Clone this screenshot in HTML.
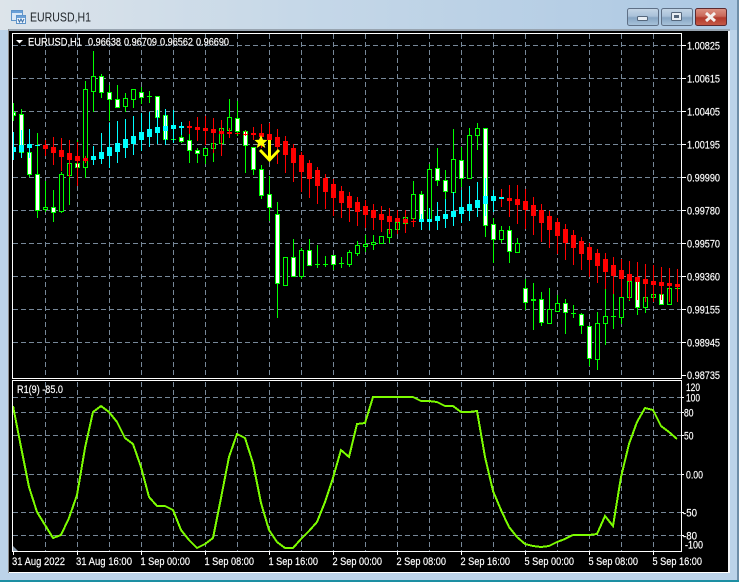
<!DOCTYPE html>
<html><head><meta charset="utf-8"><style>
html,body{margin:0;padding:0;background:#bcd3e9}
svg{display:block}
text{font-family:"Liberation Sans",sans-serif;font-size:11px;fill:#fff;stroke:#fff;stroke-width:.18}
</style></head><body>
<svg xmlns="http://www.w3.org/2000/svg" width="739" height="582" viewBox="0 0 739 582" shape-rendering="geometricPrecision">
<defs>
<linearGradient id="tb" x1="0" x2="1" y1="0" y2="0"><stop offset="0" stop-color="#dde4ea"/><stop offset=".4" stop-color="#c6d8e8"/><stop offset="1" stop-color="#acc8e3"/></linearGradient>
<linearGradient id="btn" x1="0" x2="0" y1="0" y2="1"><stop offset="0" stop-color="#c5d6e6"/><stop offset=".45" stop-color="#a9c1d9"/><stop offset=".55" stop-color="#87a5c3"/><stop offset="1" stop-color="#a9c4dc"/></linearGradient>
<linearGradient id="cl" x1="0" x2="0" y1="0" y2="1"><stop offset="0" stop-color="#dc9384"/><stop offset=".45" stop-color="#c9695a"/><stop offset=".55" stop-color="#b23a2c"/><stop offset="1" stop-color="#c65a48"/></linearGradient>
</defs>
<rect width="739" height="582" fill="#bcd3e9"/>
<rect width="739" height="30" fill="url(#tb)"/>
<rect x="8" y="29" width="722" height="2" fill="#98a4b0"/>
<rect x="8" y="29" width="1" height="544" fill="#8c8c8c"/>
<rect x="9" y="31" width="719" height="541" fill="#000"/>
<rect x="9" y="572" width="721" height="1" fill="#fff"/>
<rect x="728" y="31" width="2" height="542" fill="#f4f6f8"/>
<rect x="737" y="0" width="2" height="582" fill="#6f8ea8"/>
<rect x="0" y="580" width="739" height="2" fill="#1d8fa3"/>

<!-- title icon -->
<rect x="11.5" y="10.5" width="11" height="10" fill="#dbe9f7" stroke="#5f94c9"/>
<rect x="12" y="11" width="10" height="2" fill="#6aa0d8"/>
<rect x="16.5" y="15.5" width="9" height="8" fill="#eef5fc" stroke="#5f94c9"/>
<rect x="17" y="16" width="8" height="2" fill="#6aa0d8"/>
<path d="M18 19l1.5 3 1.5-3 1.5 3 1.5-3" fill="none" stroke="#3b6fa8"/>
<text x="30" y="21.5" textLength="61" lengthAdjust="spacingAndGlyphs" style="font-size:12.5px;fill:#22272c;stroke:none">EURUSD,H1</text>

<!-- buttons -->
<rect x="627.5" y="8.5" width="31" height="17" rx="2" fill="url(#btn)" stroke="#5f7086"/>
<rect x="637.5" y="16.5" width="10" height="4" rx="1" fill="#e8eef4" stroke="#55677c"/>
<rect x="661.5" y="8.5" width="31" height="17" rx="2" fill="url(#btn)" stroke="#5f7086"/>
<rect x="671.5" y="12.5" width="10" height="8" rx="1" fill="#e8eef4" stroke="#55677c"/>
<rect x="674" y="15" width="5" height="3" fill="#55677c"/>
<rect x="695.5" y="8.5" width="31" height="17" rx="2" fill="url(#cl)" stroke="#5c2a30"/>
<path d="M706 13l9 8M715 13l-9 8" stroke="#f4f0ee" stroke-width="3" fill="none"/>

<!-- grid -->
<g fill="none" stroke="#778899" stroke-dasharray="5 3">
<path d="M13 45.5H681M13 78.5H681M13 111.5H681M13 144.5H681M13 177.5H681M13 210.5H681M13 243.5H681M13 276.5H681M13 309.5H681M13 342.5H681"/>
<path d="M45.5 34V378M77.5 34V378M109.5 34V378M141.5 34V378M173.5 34V378M205.5 34V378M237.5 34V378M269.5 34V378M301.5 34V378M333.5 34V378M365.5 34V378M397.5 34V378M429.5 34V378M461.5 34V378M493.5 34V378M525.5 34V378M557.5 34V378M589.5 34V378M621.5 34V378M653.5 34V378"/>
<path d="M13 397.5H681M13 412.5H681M13 435.5H681M13 474.5H681M13 512.5H681M13 535.5H681"/>
<path d="M45.5 382V551M77.5 382V551M109.5 382V551M141.5 382V551M173.5 382V551M205.5 382V551M237.5 382V551M269.5 382V551M301.5 382V551M333.5 382V551M365.5 382V551M397.5 382V551M429.5 382V551M461.5 382V551M493.5 382V551M525.5 382V551M557.5 382V551M589.5 382V551M621.5 382V551M653.5 382V551"/>
</g>

<!-- green wicks -->
<path fill="none" stroke="#00ff00" d="M13.5 103V121M21.5 109V157M29.5 148V177M37.5 133V218M45.5 181V212M53.5 190V222M61.5 172V213M69.5 140V205M77.5 140V186M85.5 81V178M93.5 51V112M101.5 74V98M109.5 85V121M117.5 85V108M125.5 93V112M133.5 89V108M141.5 87V104M149.5 91V103M165.5 109V144M173.5 135V143M181.5 133V143M189.5 134V163M197.5 148V163M205.5 148V164M213.5 143V162M221.5 128V156M229.5 99V138M237.5 101V136M245.5 130V173M253.5 147V175M261.5 165V199M269.5 176V221M277.5 202V318M293.5 239V276M301.5 248V279M309.5 239V265M317.5 245V268M325.5 256V267M333.5 255V270M341.5 257V268M349.5 250V267M357.5 241V256M365.5 235V252M373.5 235V250M381.5 236V243M389.5 229V243M397.5 222V233M405.5 217V233M413.5 181V220M421.5 191V220M429.5 164V220M437.5 148V186M445.5 170V200M453.5 129V192M461.5 147V187M469.5 128V178M477.5 123V150M485.5 128V237M493.5 218V263M501.5 226V243M509.5 226V263M517.5 238V253M525.5 279V310M533.5 283V330M541.5 292V326M549.5 288V323M557.5 295V311M565.5 299V334M573.5 305V318M581.5 313V334M589.5 326V366M597.5 312V370M605.5 289V345M613.5 294V329M621.5 297V324M629.5 281V301M637.5 281V315M645.5 297V313"/>
<!-- green crosses -->
<path fill="none" stroke="#00ff00" d="M147 96.5h5M171 139.5h5M315 264.5h5M323 264.5h5M339 263.5h5M531 299.5h5M531 300.5h5M571 313.5h5M611 316.5h5M675 288.5h5"/>
<!-- hollow bodies -->
<path fill="#000" stroke="#00ff00" d="M43.5 207.5h4v2h-4zM59.5 174.5h4v37h-4zM67.5 163.5h4v12h-4zM83.5 89.5h4v78h-4zM91.5 76.5h4v15h-4zM123.5 98.5h4v8h-4zM131.5 89.5h4v10h-4zM203.5 148.5h4v7h-4zM211.5 143.5h4v5h-4zM219.5 128.5h4v15h-4zM227.5 117.5h4v13h-4zM283.5 257.5h4v28h-4zM299.5 250.5h4v26h-4zM347.5 252.5h4v12h-4zM355.5 245.5h4v8h-4zM363.5 244.5h4v2h-4zM371.5 242.5h4v2h-4zM379.5 236.5h4v7h-4zM387.5 229.5h4v8h-4zM395.5 222.5h4v7h-4zM403.5 217.5h4v6h-4zM411.5 194.5h4v24h-4zM427.5 169.5h4v50h-4zM451.5 159.5h4v33h-4zM467.5 135.5h4v43h-4zM475.5 128.5h4v7h-4zM499.5 230.5h4v9h-4zM515.5 243.5h4v9h-4zM547.5 309.5h4v14h-4zM555.5 303.5h4v8h-4zM595.5 323.5h4v36h-4zM603.5 316.5h4v7h-4zM619.5 297.5h4v20h-4zM627.5 281.5h4v16h-4zM643.5 297.5h4v10h-4zM651.5 294.5h4v3h-4zM667.5 288.5h4v16h-4z"/>
<!-- white bodies -->
<path fill="#fff" stroke="#00ff00" d="M13.5 112.5h2v3h-2zM19.5 114.5h4v38h-4zM27.5 152.5h4v22h-4zM35.5 174.5h4v36h-4zM51.5 207.5h4v5h-4zM75.5 163.5h4v4h-4zM99.5 76.5h4v16h-4zM107.5 92.5h4v7h-4zM115.5 99.5h4v8h-4zM139.5 92.5h4v5h-4zM155.5 96.5h4v21h-4zM163.5 115.5h4v24h-4zM179.5 137.5h4v4h-4zM187.5 140.5h4v10h-4zM195.5 150.5h4v3h-4zM235.5 118.5h4v13h-4zM243.5 131.5h4v14h-4zM251.5 147.5h4v22h-4zM259.5 169.5h4v26h-4zM267.5 194.5h4v13h-4zM275.5 214.5h4v69h-4zM291.5 257.5h4v19h-4zM307.5 250.5h4v15h-4zM331.5 255.5h4v9h-4zM419.5 194.5h4v26h-4zM435.5 168.5h4v12h-4zM443.5 180.5h4v11h-4zM459.5 160.5h4v18h-4zM483.5 128.5h4v97h-4zM491.5 224.5h4v15h-4zM507.5 230.5h4v21h-4zM523.5 288.5h4v14h-4zM539.5 299.5h4v23h-4zM563.5 303.5h4v9h-4zM579.5 314.5h4v11h-4zM587.5 326.5h4v32h-4zM635.5 281.5h4v26h-4zM659.5 294.5h4v10h-4z"/>

<!-- red wicks -->
<path fill="none" stroke="#ff0000" d="M45.5 140V156M53.5 137V165M61.5 138V171M69.5 140V177M77.5 142V186M85.5 156V163M189.5 121V134M197.5 117V141M205.5 116V145M213.5 118V153M221.5 120V156M229.5 128V138M245.5 131V136M253.5 127V140M261.5 124V148M269.5 123V153M277.5 129V164M285.5 136V173M293.5 144V182M301.5 152V192M309.5 160V198M317.5 167V204M325.5 174V209M333.5 179V216M341.5 186V218M349.5 192V222M357.5 197V226M365.5 200V228M373.5 204V230M381.5 206V232M389.5 208V234M397.5 210V234M405.5 210V233M413.5 218V227M501.5 189V207M509.5 185V217M517.5 185V224M525.5 189V229M533.5 197V235M541.5 204V242M549.5 211V248M557.5 218V254M565.5 224V260M573.5 230V265M581.5 237V270M589.5 243V277M597.5 249V283M605.5 253V289M613.5 257V294M621.5 259V297M629.5 261V300M637.5 262V300M645.5 264V302M653.5 265V302M661.5 267V300M669.5 268V302M677.5 269V302"/>
<!-- red bodies -->
<path fill="#ff0000" d="M43 145h5v4h-5zM51 147h5v6h-5zM59 150h5v7h-5zM67 153h5v7h-5zM75 156h5v5h-5zM83 158h5v3h-5zM187 126h5v2h-5zM195 127h5v3h-5zM203 128h5v3h-5zM211 129h5v4h-5zM219 131h5v3h-5zM227 132h5v2h-5zM235 133h5v1h-5zM243 134h5v1h-5zM251 133h5v2h-5zM259 133h5v4h-5zM267 134h5v6h-5zM275 137h5v10h-5zM283 141h5v14h-5zM291 148h5v15h-5zM299 155h5v17h-5zM307 163h5v16h-5zM315 170h5v16h-5zM323 178h5v14h-5zM331 184h5v14h-5zM339 191h5v12h-5zM347 196h5v12h-5zM355 202h5v10h-5zM363 206h5v9h-5zM371 210h5v8h-5zM379 214h5v6h-5zM387 216h5v6h-5zM395 218h5v4h-5zM403 219h5v4h-5zM411 221h5v1h-5zM507 198h5v3h-5zM515 199h5v6h-5zM523 201h5v9h-5zM531 205h5v11h-5zM539 210h5v13h-5zM547 216h5v14h-5zM555 222h5v14h-5zM563 229h5v14h-5zM571 235h5v13h-5zM579 241h5v13h-5zM587 247h5v13h-5zM595 253h5v13h-5zM603 259h5v13h-5zM611 265h5v11h-5zM619 270h5v9h-5zM627 274h5v7h-5zM635 277h5v5h-5zM643 279h5v5h-5zM651 281h5v4h-5zM659 282h5v4h-5zM667 283h5v3h-5zM675 284h5v3h-5z"/>
<!-- cyan wicks -->
<path fill="none" stroke="#00ffff" d="M13.5 132V160M21.5 130V158M29.5 129V158M93.5 146V165M101.5 133V164M109.5 123V168M117.5 121V163M125.5 119V158M133.5 116V155M141.5 113V151M149.5 112V147M157.5 110V144M165.5 109V145M173.5 110V143M181.5 122V135M421.5 214V230M429.5 208V230M437.5 202V230M445.5 199V228M453.5 192V226M461.5 190V223M469.5 186V221M477.5 182V217M485.5 178V216M493.5 190V212"/>
<!-- cyan bodies -->
<path fill="#00ffff" d="M13 147h3v5h-3zM19 145h5v7h-5zM27 144h5v4h-5zM35 145h5v1h-5zM91 156h5v4h-5zM99 152h5v7h-5zM107 147h5v9h-5zM115 143h5v9h-5zM123 139h5v9h-5zM131 136h5v8h-5zM139 132h5v8h-5zM147 129h5v8h-5zM155 127h5v6h-5zM163 126h5v5h-5zM171 125h5v4h-5zM179 126h5v2h-5zM419 219h5v3h-5zM427 219h5v3h-5zM435 216h5v5h-5zM443 214h5v5h-5zM451 211h5v6h-5zM459 207h5v7h-5zM467 204h5v7h-5zM475 200h5v8h-5zM483 196h5v8h-5zM491 196h5v5h-5zM499 197h5v2h-5z"/>

<!-- signal -->
<polygon fill="#ffff00" points="261,135 263,139.8 267.5,140 264,143.2 265.3,148 261,145.3 256.7,148 258,143.2 254.5,140 259,139.8"/>
<path d="M269.5 140V158M260 150L269.5 160L279 150" fill="none" stroke="#ffff00" stroke-width="3"/>

<!-- oscillator -->
<polyline shape-rendering="crispEdges" fill="none" stroke="#7cfc00" stroke-width="2" points="13,406 21,447 29,487 37,512 45,525 53,538 61,535 69,518 77,495 85,448 93,412 101,406 109,412 117,422 125,438 133,444 141,467 149,497 157,506 165,506 173,510 181,530 189,540 197,548 205,544 213,538 221,498 229,457 237,434 245,438 253,463 261,503 269,530 277,542 285,548 293,548 301,539 309,531 317,522 325,502 333,478 341,450 349,457 357,424 365,423 373,397 381,397 389,397 397,397 405,397 413,397 421,401 429,401 437,402 445,406 453,406 461,412 469,412 477,411 485,457 493,491 501,510 509,527 517,537 525,544 533,546 541,547 549,546 557,542 565,539 573,535 581,535 589,535 597,534 605,516 613,526 621,477 629,444 637,422 645,408 653,410 661,426 669,432 677,439"/>
<polygon points="13,546 19,552 13,552" fill="#8899aa"/>

<!-- frames -->
<g fill="none" stroke="#fff">
<rect x="12.5" y="33.5" width="669" height="345"/>
<rect x="12.5" y="380.5" width="669" height="171"/>
<path d="M682 45.5h4M682 78.5h4M682 111.5h4M682 144.5h4M682 177.5h4M682 210.5h4M682 243.5h4M682 276.5h4M682 309.5h4M682 342.5h4M682 375.5h4"/>
<path d="M682 397.5h2M682 412.5h2M682 435.5h2M682 474.5h2M682 512.5h2M682 535.5h2"/>
<path d="M13.5 552v3M77.5 552v3M141.5 552v3M205.5 552v3M269.5 552v3M333.5 552v3M397.5 552v3M461.5 552v3M525.5 552v3M589.5 552v3M653.5 552v3"/>
</g>

<!-- header -->
<polygon points="16,40 23,40 19.5,43.5" fill="#fff"/>
<text x="28" y="45.5" textLength="54" lengthAdjust="spacingAndGlyphs">EURUSD,H1</text>
<text x="88" y="45.5" textLength="33" lengthAdjust="spacingAndGlyphs">0.96638</text>
<text x="124" y="45.5" textLength="33" lengthAdjust="spacingAndGlyphs">0.96709</text>
<text x="160" y="45.5" textLength="33" lengthAdjust="spacingAndGlyphs">0.96562</text>
<text x="196" y="45.5" textLength="33" lengthAdjust="spacingAndGlyphs">0.96690</text>
<text x="17" y="393" textLength="46" lengthAdjust="spacingAndGlyphs">R1(9) -85.0</text>

<!-- price labels -->
<g>
<text x="687" y="49.5" textLength="33" lengthAdjust="spacingAndGlyphs">1.00825</text>
<text x="687" y="82.5" textLength="33" lengthAdjust="spacingAndGlyphs">1.00615</text>
<text x="687" y="115.5" textLength="33" lengthAdjust="spacingAndGlyphs">1.00405</text>
<text x="687" y="148.5" textLength="33" lengthAdjust="spacingAndGlyphs">1.00195</text>
<text x="687" y="181.5" textLength="33" lengthAdjust="spacingAndGlyphs">0.99990</text>
<text x="687" y="214.5" textLength="33" lengthAdjust="spacingAndGlyphs">0.99780</text>
<text x="687" y="247.5" textLength="33" lengthAdjust="spacingAndGlyphs">0.99570</text>
<text x="687" y="280.5" textLength="33" lengthAdjust="spacingAndGlyphs">0.99360</text>
<text x="687" y="313.5" textLength="33" lengthAdjust="spacingAndGlyphs">0.99155</text>
<text x="687" y="346.5" textLength="33" lengthAdjust="spacingAndGlyphs">0.98945</text>
<text x="687" y="379" textLength="33" lengthAdjust="spacingAndGlyphs">0.98735</text>
<text x="686" y="391" textLength="14" lengthAdjust="spacingAndGlyphs">120</text>
<text x="686" y="401.5" textLength="14" lengthAdjust="spacingAndGlyphs">100</text>
<text x="684" y="416.5" textLength="9.5" lengthAdjust="spacingAndGlyphs">80</text>
<text x="684" y="439.5" textLength="9.5" lengthAdjust="spacingAndGlyphs">50</text>
<text x="686" y="478.5" textLength="17" lengthAdjust="spacingAndGlyphs">0.00</text>
<text x="683" y="516.5" textLength="14" lengthAdjust="spacingAndGlyphs">-50</text>
<text x="683" y="539.5" textLength="14" lengthAdjust="spacingAndGlyphs">-80</text>
<text x="685" y="548.5" textLength="18" lengthAdjust="spacingAndGlyphs">-100</text>
</g>

<!-- time labels -->
<g>
<text x="12" y="565" textLength="53" lengthAdjust="spacingAndGlyphs">31 Aug 2022</text>
<text x="76" y="565" textLength="56" lengthAdjust="spacingAndGlyphs">31 Aug 16:00</text>
<text x="140.5" y="565" textLength="49.5" lengthAdjust="spacingAndGlyphs">1 Sep 00:00</text>
<text x="204.5" y="565" textLength="49.5" lengthAdjust="spacingAndGlyphs">1 Sep 08:00</text>
<text x="268.5" y="565" textLength="49.5" lengthAdjust="spacingAndGlyphs">1 Sep 16:00</text>
<text x="332.5" y="565" textLength="49.5" lengthAdjust="spacingAndGlyphs">2 Sep 00:00</text>
<text x="396.5" y="565" textLength="49.5" lengthAdjust="spacingAndGlyphs">2 Sep 08:00</text>
<text x="460.5" y="565" textLength="49.5" lengthAdjust="spacingAndGlyphs">2 Sep 16:00</text>
<text x="524.5" y="565" textLength="49.5" lengthAdjust="spacingAndGlyphs">5 Sep 00:00</text>
<text x="588.5" y="565" textLength="49.5" lengthAdjust="spacingAndGlyphs">5 Sep 08:00</text>
<text x="652.5" y="565" textLength="49.5" lengthAdjust="spacingAndGlyphs">5 Sep 16:00</text>
</g>
</svg>
</body></html>
